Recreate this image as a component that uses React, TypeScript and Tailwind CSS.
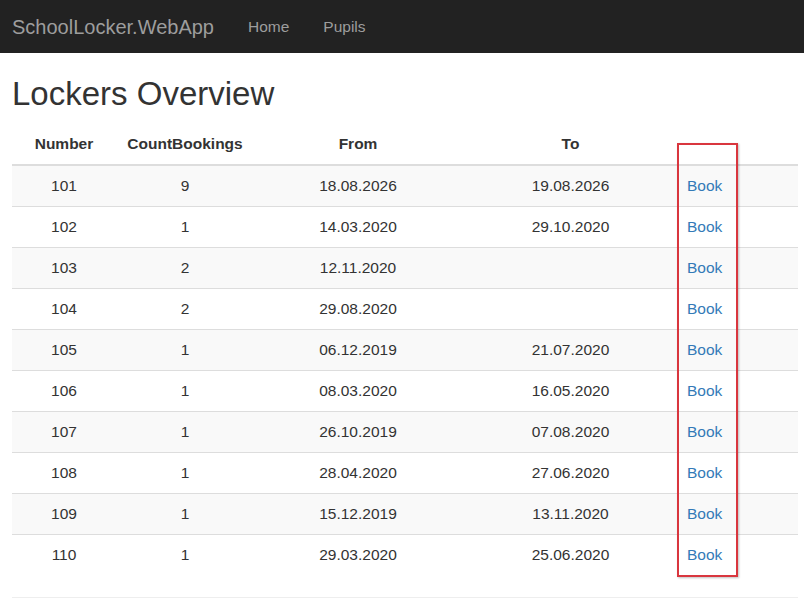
const lockers = [
  { number: 101, count: 9, from: "18.08.2026", to: "19.08.2026" },
  { number: 102, count: 1, from: "14.03.2020", to: "29.10.2020" },
  { number: 103, count: 2, from: "12.11.2020", to: "" },
  { number: 104, count: 2, from: "29.08.2020", to: "" },
  { number: 105, count: 1, from: "06.12.2019", to: "21.07.2020" },
  { number: 106, count: 1, from: "08.03.2020", to: "16.05.2020" },
  { number: 107, count: 1, from: "26.10.2019", to: "07.08.2020" },
  { number: 108, count: 1, from: "28.04.2020", to: "27.06.2020" },
  { number: 109, count: 1, from: "15.12.2019", to: "13.11.2020" },
  { number: 110, count: 1, from: "29.03.2020", to: "25.06.2020" },
]

export default function App() {
  return (
    <div className="min-h-[600px] bg-white text-[#333] text-[15.5px] [font-family:'Liberation_Sans',Arial,sans-serif]">
      {/* navbar */}
      <nav className="h-[53px] bg-[#222] flex items-center px-3">
        <span className="text-[20px] text-[#9d9d9d]">SchoolLocker.WebApp</span>
        <span className="ml-[34px] text-[#9d9d9d]">Home</span>
        <span className="ml-[34px] text-[#9d9d9d]">Pupils</span>
      </nav>

      <div className="pl-3 pr-[6px]">
        <h2 className="mt-[23px] mb-[12px] text-[33px] leading-[36px] text-[#333]">Lockers Overview</h2>

        <div className="relative">
          <table className="w-full border-collapse table-fixed">
            <colgroup>
              <col className="w-[104px]" />
              <col className="w-[138px]" />
              <col className="w-[208px]" />
              <col className="w-[217px]" />
              <col />
            </colgroup>
            <thead>
              <tr className="border-b-2 border-[#ddd]">
                <th className="h-[41px] px-2 text-center font-bold">Number</th>
                <th className="h-[41px] px-2 text-center font-bold">CountBookings</th>
                <th className="h-[41px] px-2 text-center font-bold">From</th>
                <th className="h-[41px] px-2 text-center font-bold">To</th>
                <th className="h-[41px] px-2"></th>
              </tr>
            </thead>
            <tbody>
              {lockers.map((l, i) => (
                <tr key={l.number} className={(i % 2 === 0 ? "bg-[#f9f9f9]" : "bg-white") + (i > 0 ? " border-t border-[#ddd]" : "")}>
                  <td className="h-[41px] px-2 text-center">{l.number}</td>
                  <td className="h-[41px] px-2 text-center">{l.count}</td>
                  <td className="h-[41px] px-2 text-center">{l.from}</td>
                  <td className="h-[41px] px-2 text-center">{l.to}</td>
                  <td className="h-[41px] px-2 text-[#337ab7]">Book</td>
                </tr>
              ))}
            </tbody>
          </table>

          {/* highlight box */}
          <div className="absolute left-[665px] top-[19px] w-[61px] h-[434px] border-2 border-[#d9363e] shadow-[1px_1px_2px_rgba(0,0,0,0.25)]"></div>
        </div>

        <hr className="mt-[22px] border-t border-[#eee]" />
      </div>
    </div>
  )
}
